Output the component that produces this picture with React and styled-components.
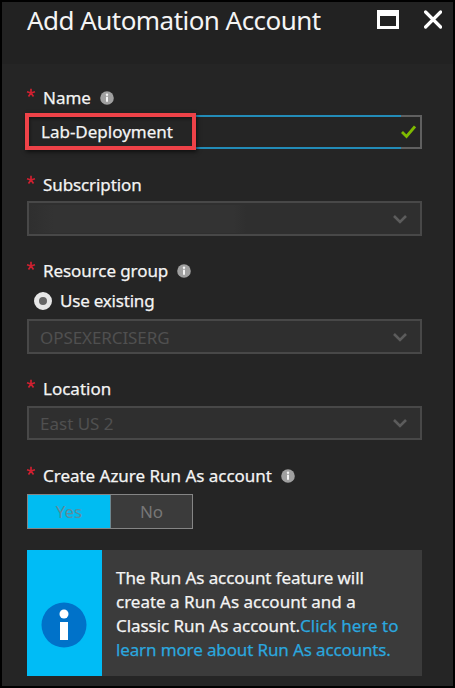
import React from "react";
import styled, { createGlobalStyle } from "styled-components";

const GlobalStyle = createGlobalStyle`
  * { box-sizing: border-box; }
  body { margin: 0; background: #000; }
`;

const Blade = styled.main`
  width: 455px;
  height: 688px;
  border: solid #000;
  border-width: 2px;
  background: #252525;
  color: #f4f4f4;
  font: 17px/24px "Noto Sans", "Open Sans", sans-serif;
  overflow: hidden;
  white-space: nowrap;
`;

const Header = styled.header`
  height: 62px;
  padding: 0 11px 0 25px;
  display: flex;
  align-items: flex-start;
  background: #222;
`;

const Title = styled.h1`
  flex: 1;
  margin: 0;
  font-size: 26px;
  line-height: 36px;
  font-weight: 400;
  letter-spacing: -0.54px;
`;

const WindowActions = styled.div`
  display: flex;
  gap: 25px;
  padding-top: 8px;
`;

const IconButton = styled.button`
  display: block;
  padding: 0;
  border: 0;
  background: none;
  line-height: 0;
`;

const Form = styled.form`
  padding: 22px 31px 0 25px;
`;

const Label = styled.div`
  height: 24px;
  margin-top: ${(p) => p.$top || 0}px;
  margin-bottom: ${(p) => p.$bottom || 0}px;
  display: flex;
  align-items: center;
`;

const Required = styled.svg`
  width: 10px;
  height: 10px;
  margin: -10px 7px 0 -1px;
  flex: none;
`;

const Text = styled.span`
  letter-spacing: ${(p) => p.$spacing || 0}px;
  -webkit-text-stroke: ${(p) => (p.$light ? 0 : 0.25)}px currentColor;
`;

const InfoIcon = styled.svg`
  width: 14px;
  height: 14px;
  margin-left: 9px;
`;

const Field = styled.div`
  position: relative;
  height: ${(p) => p.$height || 34}px;
  padding: 2px 13px 0 11px;
  display: flex;
  align-items: center;
  justify-content: space-between;
  border: 2px solid #484848;
  background: #2f2f2f;
  color: #505050;
`;

const NameField = styled(Field)`
  padding: 0 4px 0 12px;
  border: solid #606060;
  border-width: 2px;
  border-image: linear-gradient(to right, #238cb8 374px, #606060 374px) 2;
  background: #252525;
  color: #f4f4f4;
`;

const Highlight = styled.div`
  position: absolute;
  left: -4px;
  top: -4px;
  width: 171px;
  height: 37px;
  border: 4px solid #ee4248;
  box-shadow: 1px 2px 4px #0009, inset 1px 2px 3px #0006;
`;

const Redaction = styled.span`
  width: 217px;
  height: 28px;
  margin: -2px 0 0 -11px;
  background: linear-gradient(to right, #2f2f2f, #333 25px, #333 205px, #2f2f2f);
`;

const Radio = styled.span`
  width: 18px;
  height: 18px;
  margin: 0 8px 0 7px;
  border: 5px solid #e6e6e6;
  border-radius: 50%;
  background: #656565;
`;

const Toggle = styled.div`
  width: 166px;
  height: 35px;
  display: flex;
  border: 1px solid #858585;
`;

const ToggleOption = styled.div`
  width: ${(p) => (p.$active ? 83 : 81)}px;
  padding-top: 1px;
  display: flex;
  align-items: center;
  justify-content: center;
  border-right: ${(p) => (p.$active ? "1px solid #6d8790" : "0")};
  background: ${(p) => (p.$active ? "#00bcf2" : "#3b3b3b")};
  color: ${(p) => (p.$active ? "#5c8d9d" : "#777")};
`;

const Notice = styled.section`
  height: 126px;
  margin-top: 21px;
  display: flex;
  background: #3b3b3b;
`;

const NoticeIcon = styled.div`
  width: 75px;
  padding: 24px 1px 0 0;
  display: flex;
  align-items: center;
  justify-content: center;
  background: #00bcf6;
`;

const NoticeCopy = styled.div`
  padding: 16px 0 0 14px;
  display: flex;
  flex-direction: column;
`;

const Link = styled.a`
  color: #2ba7df;
  letter-spacing: ${(p) => p.$spacing || 0}px;
  -webkit-text-stroke: 0.25px currentColor;
`;

const Star = () => (
  <Required viewBox="0 0 10 10" fill="none" stroke="#cf2030" strokeWidth="1.7">
    <path d="M5 5V.8M5 5 1 3.7M5 5l4-1.3M5 5 2.5 8.6M5 5l2.5 3.6" />
  </Required>
);

const Info = () => (
  <InfoIcon viewBox="0 0 14 14">
    <circle cx="7" cy="7" r="6.8" fill="#a0a0a0" />
    <circle cx="7" cy="3.8" r="1.2" fill="#f4f4f4" />
    <path d="M7 5.8v5" stroke="#f4f4f4" strokeWidth="2" fill="none" />
  </InfoIcon>
);

const Chevron = () => (
  <svg width="14" height="10" viewBox="0 0 14 10" fill="none" stroke="#5c5c5c" strokeWidth="2.6">
    <path d="m1 1 6 6 6-6" />
  </svg>
);

export default function App() {
  return (
    <>
      <GlobalStyle />
      <Blade>
        <Header>
          <Title>Add Automation Account</Title>
          <WindowActions>
            <IconButton type="button" aria-label="Maximize">
              <svg width="22" height="19" viewBox="0 0 22 19">
                <path fill="#fff" fillRule="evenodd" d="M0 0h22v19H0zM3 6v10h16V6z" />
              </svg>
            </IconButton>
            <IconButton type="button" aria-label="Close">
              <svg width="18" height="19" viewBox="0 0 18 19" stroke="#fff" strokeWidth="3.2" strokeLinecap="round">
                <path d="m1.6 2 15 15M16.6 2l-15 15" />
              </svg>
            </IconButton>
          </WindowActions>
        </Header>
        <Form>
          <Label $bottom={5}><Star /><Text>Name</Text><Info /></Label>
          <NameField>
            <Text>Lab-Deployment</Text>
            <svg width="15" height="14" viewBox="0 0 15 14" fill="none" stroke="#7fba00" strokeWidth="2.8">
              <path d="m1 7 4.5 4.5L14 1.5" />
            </svg>
            <Highlight />
          </NameField>

          <Label $top={24} $bottom={4}><Star /><Text $spacing={-0.1}>Subscription</Text></Label>
          <Field $height={35}><Redaction /><Chevron /></Field>

          <Label $top={23} $bottom={6}><Star /><Text $spacing={-0.08}>Resource group</Text><Info /></Label>
          <Label $bottom={6}><Radio /><Text $spacing={-0.2}>Use existing</Text></Label>
          <Field $height={35}><Text $light $spacing={-0.08}>OPSEXERCISERG</Text><Chevron /></Field>

          <Label $top={23} $bottom={5}><Star /><Text>Location</Text></Label>
          <Field><Text $light>East US 2</Text><Chevron /></Field>

          <Label $top={24} $bottom={6}><Star /><Text $spacing={-0.02}>Create Azure Run As account</Text><Info /></Label>
          <Toggle>
            <ToggleOption $active><Text $light>Yes</Text></ToggleOption>
            <ToggleOption><Text $light>No</Text></ToggleOption>
          </Toggle>

          <Notice>
            <NoticeIcon>
              <svg width="46" height="46" viewBox="0 0 46 46">
                <circle cx="23" cy="23" r="22.5" fill="#0072c9" />
                <circle cx="23" cy="12" r="4.5" fill="#fff" />
                <path d="M19 20h8v18h-8z" fill="#fff" />
              </svg>
            </NoticeIcon>
            <NoticeCopy>
              <Text $spacing={-0.07}>The Run As account feature will</Text>
              <Text>create a Run As account and a</Text>
              <span><Text $spacing={-0.05}>Classic Run As account.</Text><Link>Click here to</Link></span>
              <Link $spacing={-0.13}>learn more about Run As accounts.</Link>
            </NoticeCopy>
          </Notice>
        </Form>
      </Blade>
    </>
  );
}
